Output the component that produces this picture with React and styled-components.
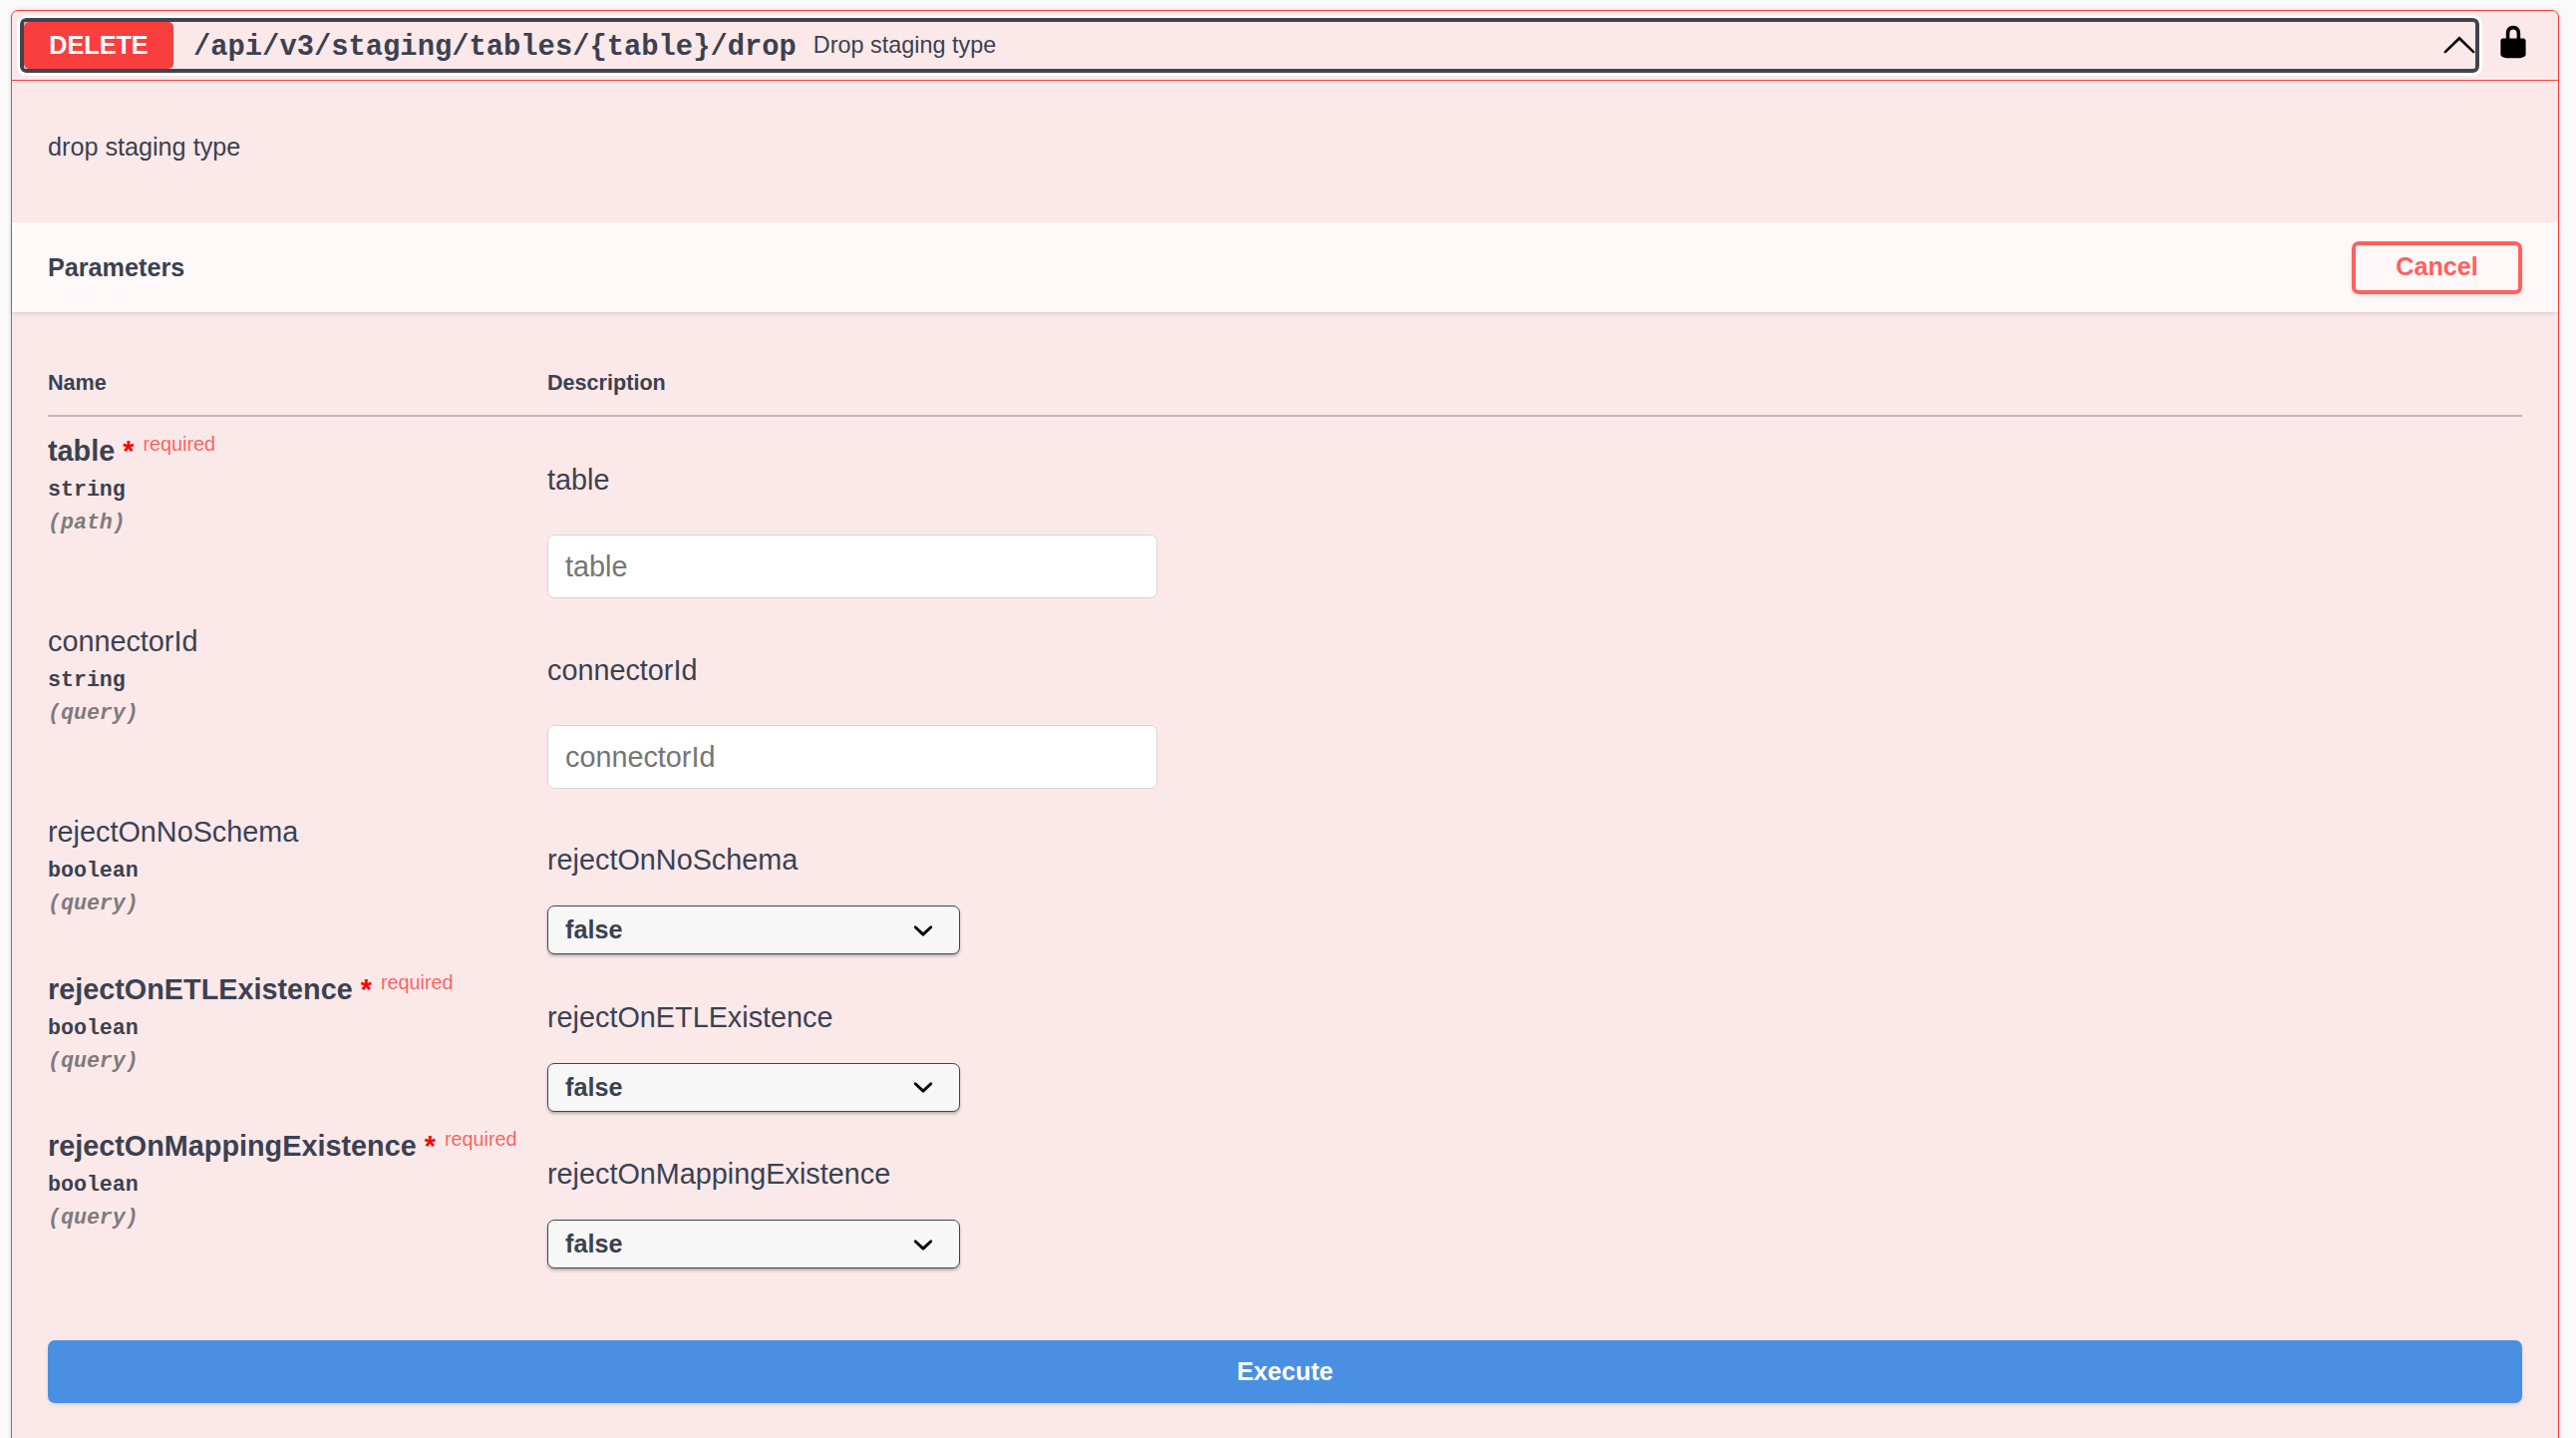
import React from "react";
import styled, { createGlobalStyle } from "styled-components";

const GlobalStyle = createGlobalStyle`
  html, body {
    margin: 0;
    height: 1442px;
    overflow: hidden;
    background: #fafafa;
  }
  body {
    font-family: "Liberation Sans", Arial, sans-serif;
    color: #3b4151;
  }
`;

const params = [
  { name: "table", type: "string", where: "path", required: true, kind: "input" },
  { name: "connectorId", type: "string", where: "query", kind: "input" },
  { name: "rejectOnNoSchema", type: "boolean", where: "query", kind: "select" },
  { name: "rejectOnETLExistence", type: "boolean", where: "query", required: true, kind: "select" },
  { name: "rejectOnMappingExistence", type: "boolean", where: "query", required: true, kind: "select" },
];

const Arrow = ({ up }) => (
  <ArrowIcon $up={up} viewBox="0 0 20 20">
    <path d="M17.418 6.109c.272-.268.709-.268.979 0s.271.701 0 .969l-7.908 7.83c-.27.268-.707.268-.979 0l-7.908-7.83c-.27-.268-.27-.701 0-.969.271-.268.709-.268.979 0L10 13.25l7.418-7.141z" />
  </ArrowIcon>
);

const Lock = () => (
  <LockIcon viewBox="0 0 20 20">
    <path d="M15.8 8H14V5.6C14 2.703 12.665 1 10 1 7.334 1 6 2.703 6 5.6V8H4c-.553 0-1 .646-1 1.199V17c0 .549.428 1.139.951 1.307l1.197.387C5.672 18.861 6.55 19 7.1 19h5.8c.549 0 1.428-.139 1.951-.307l1.196-.387c.524-.167.953-.757.953-1.306V9.199C17 8.646 16.352 8 15.8 8zM12 8H8V5.199C8 3.754 8.797 3 10 3c1.203 0 2 .754 2 2.199V8z" />
  </LockIcon>
);

const Chevron = () => (
  <SelectIcon viewBox="0 0 20 20">
    <path d="M13.418 7.859a.695.695 0 0 1 .978 0 .68.68 0 0 1 0 .969l-3.908 3.83a.697.697 0 0 1-.979 0l-3.908-3.83a.68.68 0 0 1 0-.969.695.695 0 0 1 .978 0L10 11l3.418-3.141z" />
  </SelectIcon>
);

const ParamRow = ({ name, type, where, required, kind }) => (
  <Row $kind={kind}>
    <NameCell>
      <ParamName $required={required}>
        {name}
        {required && (
          <Star>
            *<Required>required</Required>
          </Star>
        )}
      </ParamName>
      <ParamType>{type}</ParamType>
      <ParamIn>({where})</ParamIn>
    </NameCell>
    <DescCell $kind={kind}>
      <DescText $kind={kind}>{name}</DescText>
      {kind === "input" ? (
        <TextInput placeholder={name} />
      ) : (
        <SelectBox>
          false
          <Chevron />
        </SelectBox>
      )}
    </DescCell>
  </Row>
);

export default function App() {
  return (
    <>
      <GlobalStyle />
      <Page>
        <Block>
          <Summary>
            <SummaryButton>
              <Method>DELETE</Method>
              <Path>/api/v3/staging/tables/{"{table}"}/drop</Path>
              <SummaryDesc>Drop staging type</SummaryDesc>
              <Arrow up />
            </SummaryButton>
            <Lock />
          </Summary>
          <Intro>drop staging type</Intro>
          <SectionHeader>
            <SectionTitle>Parameters</SectionTitle>
            <CancelButton>Cancel</CancelButton>
          </SectionHeader>
          <Params>
            <HeadRow>
              <HeadCell>Name</HeadCell>
              <HeadCell>Description</HeadCell>
            </HeadRow>
            {params.map((p) => (
              <ParamRow key={p.name} {...p} />
            ))}
          </Params>
          <ExecuteWrap>
            <ExecuteButton>Execute</ExecuteButton>
          </ExecuteWrap>
        </Block>
      </Page>
    </>
  );
}

const Page = styled.div`
  padding: 10px 17px 0 11px;
  height: 1432px;
  overflow: hidden;
`;

const Block = styled.div`
  box-sizing: border-box;
  min-height: 1500px;
  border: 1px solid #f93e3e;
  border-radius: 7px;
  background: #fbe9e9;
  box-shadow: 0 0 5px rgba(0, 0, 0, 0.12);
`;

const Summary = styled.div`
  box-sizing: border-box;
  height: 70px;
  display: flex;
  align-items: center;
  padding: 0 27px 0 8px;
  justify-content: space-between;
  border-bottom: 1px solid #f93e3e;
`;

const SummaryButton = styled.div`
  box-sizing: border-box;
  width: 2467px;
  height: 55px;
  display: flex;
  align-items: center;
  border: 4px solid #41444e;
  border-radius: 6px;
  outline: 3px solid #ffffff;
`;

const Method = styled.span`
  width: 150px;
  height: 47px;
  display: flex;
  align-items: center;
  justify-content: center;
  margin-right: 20px;
  border-radius: 5px;
  background: #f93e3e;
  color: #ffffff;
  font-size: 25.2px;
  font-weight: 700;
`;

const Path = styled.span`
  padding-top: 3px;
  font-family: "Liberation Mono", "Courier New", monospace;
  font-size: 28.8px;
  font-weight: 700;
`;

const SummaryDesc = styled.span`
  flex: 1;
  margin-left: 17px;
  font-size: 23.4px;
`;

const ArrowIcon = styled.svg`
  width: 36px;
  height: 36px;
  margin-right: -2px;
  fill: #000000;
  transform: ${(p) => (p.$up ? "rotate(180deg)" : "none")};
`;

const LockIcon = styled.svg`
  width: 36px;
  height: 36px;
  margin-bottom: 7px;
  fill: #000000;
`;

const Intro = styled.p`
  margin: 0;
  height: 142px;
  padding: 48px 36px 0;
  box-sizing: border-box;
  font-size: 25.2px;
  line-height: 36px;
`;

const SectionHeader = styled.div`
  box-sizing: border-box;
  height: 90px;
  display: flex;
  align-items: center;
  justify-content: space-between;
  padding: 0 36px;
  background: #fef9f8;
  box-shadow: 0 2px 4px rgba(0, 0, 0, 0.1);
`;

const SectionTitle = styled.h4`
  margin: 0;
  font-size: 25.2px;
  font-weight: 700;
`;

const CancelButton = styled.button`
  box-sizing: border-box;
  width: 171px;
  height: 53px;
  padding-bottom: 2px;
  border: 4px solid #ff6060;
  border-radius: 7px;
  background: transparent;
  color: #ff6060;
  font-family: inherit;
  font-size: 25.2px;
  font-weight: 700;
  box-shadow: 0 2px 4px rgba(0, 0, 0, 0.1);
`;

const Params = styled.div`
  padding: 54px 36px 0;
`;

const HeadRow = styled.div`
  display: grid;
  grid-template-columns: 501px 1fr;
  height: 51px;
  box-sizing: border-box;
  border-bottom: 2px solid rgba(59, 65, 81, 0.3);
`;

const HeadCell = styled.div`
  font-size: 21.6px;
  font-weight: 700;
  line-height: 34px;
`;

const Row = styled.div`
  display: grid;
  grid-template-columns: 501px 1fr;
  height: ${(p) => (p.$kind === "input" ? "191px" : "157.5px")};
`;

const NameCell = styled.div`
  padding-top: 16px;
`;

const ParamName = styled.div`
  font-size: 28.8px;
  font-weight: ${(p) => (p.$required ? 700 : 400)};
  line-height: 36px;
  white-space: nowrap;
`;

const Star = styled.span`
  margin-left: 8px;
  color: #ff0000;
  line-height: 0;
`;

const Required = styled.span`
  position: relative;
  top: -10px;
  margin-left: 9px;
  color: rgba(255, 0, 0, 0.6);
  font-size: 19.8px;
  font-weight: 400;
`;

const ParamType = styled.div`
  padding-top: 9px;
  font-family: "Liberation Mono", "Courier New", monospace;
  font-size: 21.6px;
  font-weight: 700;
  line-height: 25px;
`;

const ParamIn = styled.div`
  padding-top: 8px;
  color: #7e7b7d;
  font-family: "Liberation Mono", "Courier New", monospace;
  font-size: 21.6px;
  font-style: italic;
  font-weight: 700;
  line-height: 25px;
`;

const DescCell = styled.div`
  padding-top: ${(p) => (p.$kind === "input" ? "45px" : "44px")};
`;

const DescText = styled.p`
  margin: 0 0 ${(p) => (p.$kind === "input" ? "37px" : "28px")};
  font-size: 28.8px;
  line-height: 36px;
`;

const TextInput = styled.input`
  display: block;
  box-sizing: border-box;
  width: 612px;
  height: 64px;
  padding: 0 17px;
  border: 1px solid #d9d4d4;
  border-radius: 7px;
  background: #ffffff;
  font-family: inherit;
  font-size: 28.8px;
  outline: none;

  &::placeholder {
    color: #757575;
    opacity: 1;
  }
`;

const SelectBox = styled.div`
  box-sizing: border-box;
  width: 414px;
  height: 49px;
  display: flex;
  align-items: center;
  justify-content: space-between;
  padding: 0 16px 0 17px;
  border: 1px solid #41444e;
  border-radius: 7px;
  background: #f7f7f7;
  box-shadow: 0 2px 3px rgba(0, 0, 0, 0.25);
  font-size: 25.2px;
  font-weight: 700;
`;

const SelectIcon = styled.svg`
  width: 40px;
  height: 40px;
  fill: #000000;
`;

const ExecuteWrap = styled.div`
  padding: 0 36px;
  margin-top: 71px;
`;

const ExecuteButton = styled.button`
  display: block;
  width: 100%;
  height: 63px;
  border: none;
  border-radius: 7px;
  background: #4a90e2;
  color: #ffffff;
  font-family: inherit;
  font-size: 25.2px;
  font-weight: 700;
  box-shadow: 0 2px 4px rgba(0, 0, 0, 0.1);
`;
